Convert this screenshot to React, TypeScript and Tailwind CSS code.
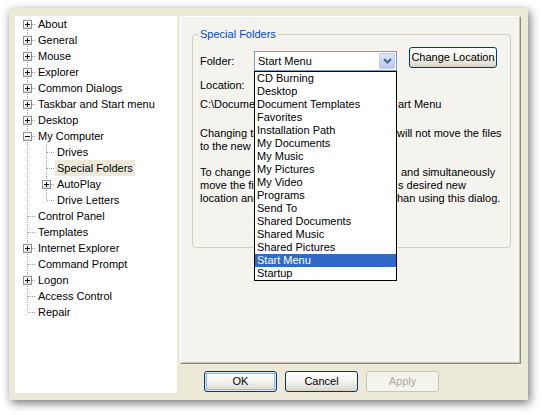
import React from "react";

type Row = {
  label: string;
  level: number;
  box?: "+" | "-";
  top: boolean;
  bottom: boolean;
  anc: boolean[];
  selected?: boolean;
};

const top0 = [
  "About",
  "General",
  "Mouse",
  "Explorer",
  "Common Dialogs",
  "Taskbar and Start menu",
  "Desktop",
];

const rows: Row[] = [
  ...top0.map((l, i) => ({ label: l, level: 0, box: "+" as const, top: i > 0, bottom: true, anc: [] })),
  { label: "My Computer", level: 0, box: "-", top: true, bottom: true, anc: [] },
  { label: "Drives", level: 1, top: true, bottom: true, anc: [true] },
  { label: "Special Folders", level: 1, top: true, bottom: true, anc: [true], selected: true },
  { label: "AutoPlay", level: 1, box: "+", top: true, bottom: true, anc: [true] },
  { label: "Drive Letters", level: 1, top: true, bottom: false, anc: [true] },
  { label: "Control Panel", level: 0, top: true, bottom: true, anc: [] },
  { label: "Templates", level: 0, top: true, bottom: true, anc: [] },
  { label: "Internet Explorer", level: 0, box: "+", top: true, bottom: true, anc: [] },
  { label: "Command Prompt", level: 0, top: true, bottom: true, anc: [] },
  { label: "Logon", level: 0, box: "+", top: true, bottom: true, anc: [] },
  { label: "Access Control", level: 0, top: true, bottom: true, anc: [] },
  { label: "Repair", level: 0, top: true, bottom: false, anc: [] },
];

const DOT = "#A0A0A0";

function AncCell({ line }: { line: boolean }) {
  return (
    <svg width="19" height="16" className="shrink-0" shapeRendering="crispEdges">
      {line && <line x1="10.5" y1="0" x2="10.5" y2="16" stroke={DOT} strokeDasharray="1 1" />}
    </svg>
  );
}

function OwnCell({ top, bottom, box }: { top: boolean; bottom: boolean; box?: "+" | "-" }) {
  return (
    <svg width="19" height="16" className="shrink-0" shapeRendering="crispEdges">
      {top && <line x1="10.5" y1="0" x2="10.5" y2="8" stroke={DOT} strokeDasharray="1 1" />}
      {bottom && <line x1="10.5" y1="8" x2="10.5" y2="16" stroke={DOT} strokeDasharray="1 1" />}
      <line x1={box ? 15 : 11} y1="8.5" x2="19" y2="8.5" stroke={DOT} strokeDasharray="1 1" />
      {box && (
        <>
          <rect x="6.5" y="4.5" width="8" height="8" fill="#FFFFFF" stroke="#8A8F9A" />
          <rect x="7" y="10" width="7" height="2" fill="#E4E2DA" />
          <line x1="8" y1="8.5" x2="13" y2="8.5" stroke="#000" />
          {box === "+" && <line x1="10.5" y1="6" x2="10.5" y2="11" stroke="#000" />}
        </>
      )}
    </svg>
  );
}

const folders = [
  "CD Burning",
  "Desktop",
  "Document Templates",
  "Favorites",
  "Installation Path",
  "My Documents",
  "My Music",
  "My Pictures",
  "My Video",
  "Programs",
  "Send To",
  "Shared Documents",
  "Shared Music",
  "Shared Pictures",
  "Start Menu",
  "Startup",
];

function XPButton({
  children,
  className = "",
  focused = false,
  disabled = false,
}: {
  children: React.ReactNode;
  className?: string;
  focused?: boolean;
  disabled?: boolean;
}) {
  if (disabled) {
    return (
      <div
        className={`flex items-center justify-center rounded-[3px] border border-[#C9C7BA] bg-[#F5F4EA] text-[#ACA899] ${className}`}
      >
        {children}
      </div>
    );
  }
  return (
    <div
      className={`flex items-center justify-center rounded-[3px] border border-[#003C74] bg-gradient-to-b from-[#FFFFFF] via-[#F3F2ED] to-[#D9D6CB] text-black ${
        focused ? "shadow-[inset_0_0_0_1px_#CEE7FF,inset_0_0_0_2px_#98B8EA]" : "shadow-[inset_0_-1px_0_#D6D0C5]"
      } ${className}`}
    >
      {children}
    </div>
  );
}

function TextLine({ left, right, rightClass = "" }: { left: string; right?: string; rightClass?: string }) {
  return (
    <div className="flex h-[13px] leading-[13px] whitespace-nowrap">
      <div className="w-[197px] shrink-0 overflow-hidden">{left}</div>
      {right && <div className={rightClass}>{right}</div>}
    </div>
  );
}

export default function App() {
  return (
    <div
      className="relative h-[415px] w-[542px] overflow-hidden bg-white text-[11px] text-black"
      style={{ fontFamily: '"Liberation Sans", Arial, sans-serif' }}
    >
      <div className="ml-[9px] mt-[8px] flex h-[392px] w-[519px] bg-[#ECE9D8] shadow-[2px_3px_9px_rgba(0,0,0,0.55)]">
        {/* Tree */}
        <div className="ml-[6px] mt-[8px] h-[377px] w-[162px] bg-white pl-[2px]">
          {rows.map((r, i) => (
            <div key={i} className="flex h-[16px] items-center">
              {r.anc.map((a, j) => (
                <AncCell key={j} line={a} />
              ))}
              <OwnCell top={r.top} bottom={r.bottom} box={r.box} />
              <span
                className={`h-[16px] whitespace-nowrap px-[2px] leading-[16px] ${r.selected ? "bg-[#ECE9D8]" : ""}`}
              >
                {r.label}
              </span>
            </div>
          ))}
        </div>

        {/* Right column */}
        <div className="ml-[3px] mt-[8px] flex w-[341px] flex-col">
          <div className="h-[348px] border-b border-l border-r border-t border-b-[#8D8B80] border-l-white border-r-[#8D8B80] border-t-white bg-[#F4F3EE] pl-[11px] pr-[9px] pt-[11px] shadow-[inset_-1px_-1px_0_#C7C5B2]">
            <fieldset className="h-[220px] rounded-[4px] border border-[#D0D0BF]">
              <legend className="ml-[5px] px-[2px] leading-[13px] text-[#0046D5]">Special Folders</legend>
              <div className="px-[7px] pt-[10px]">
                <div className="flex items-start">
                  <div className="w-[54px] pt-[3px] leading-[14px]">Folder:</div>
                  <div className="relative h-[20px] w-[143px] border border-[#7F9DB9] bg-white">
                    <div className="flex h-full items-center pl-[3px] leading-[14px]">Start Menu</div>
                    <div className="absolute right-[1px] top-[1px] flex h-[16px] w-[16px] items-center justify-center rounded-[2px] border border-[#B9CCF5] bg-gradient-to-b from-[#D8E4FD] to-[#B4C8F6]">
                      <svg width="9" height="6" viewBox="0 0 9 6">
                        <path d="M1 1 L4.5 4.5 L8 1" fill="none" stroke="#4D6185" strokeWidth="2" />
                      </svg>
                    </div>
                    <div className="absolute left-[-1px] top-[19px] z-10 w-[143px] border border-black bg-white">
                      {folders.map((f) => (
                        <div
                          key={f}
                          className={`h-[13px] pl-[2px] leading-[13px] whitespace-nowrap ${
                            f === "Start Menu" ? "bg-[#316AC5] text-white" : ""
                          }`}
                        >
                          {f}
                        </div>
                      ))}
                    </div>
                  </div>
                  <XPButton className="ml-[12px] mt-[-4px] h-[21px] w-[88px]">Change Location</XPButton>
                </div>
                <div className="mt-[8px] h-[13px] leading-[13px]">Location:</div>
                <div className="mt-[6px]">
                  <TextLine left="C:\Documents and Settings\Administrator\St" right="art Menu" rightClass="pl-[1px]" />
                </div>
                <div className="mt-[16px]">
                  <TextLine left="Changing the location of this folder " right="will not move the files" />
                  <TextLine left="to the new location." />
                </div>
                <div className="mt-[13px]">
                  <TextLine left="To change the location of this folder " right="and simultaneously" rightClass="pl-[4px]" />
                  <TextLine left="move the files, drag the folder to it" right="s desired new" rightClass="pl-[1px]" />
                  <TextLine left="location and drop it there, rather t" right="han using this dialog." />
                </div>
              </div>
            </fieldset>
          </div>
          <div className="mt-[7px] flex gap-[8px] pl-[24px]">
            <XPButton focused className="h-[21px] w-[73px]">OK</XPButton>
            <XPButton className="h-[21px] w-[73px]">Cancel</XPButton>
            <XPButton disabled className="h-[21px] w-[73px]">Apply</XPButton>
          </div>
        </div>
      </div>
    </div>
  );
}
